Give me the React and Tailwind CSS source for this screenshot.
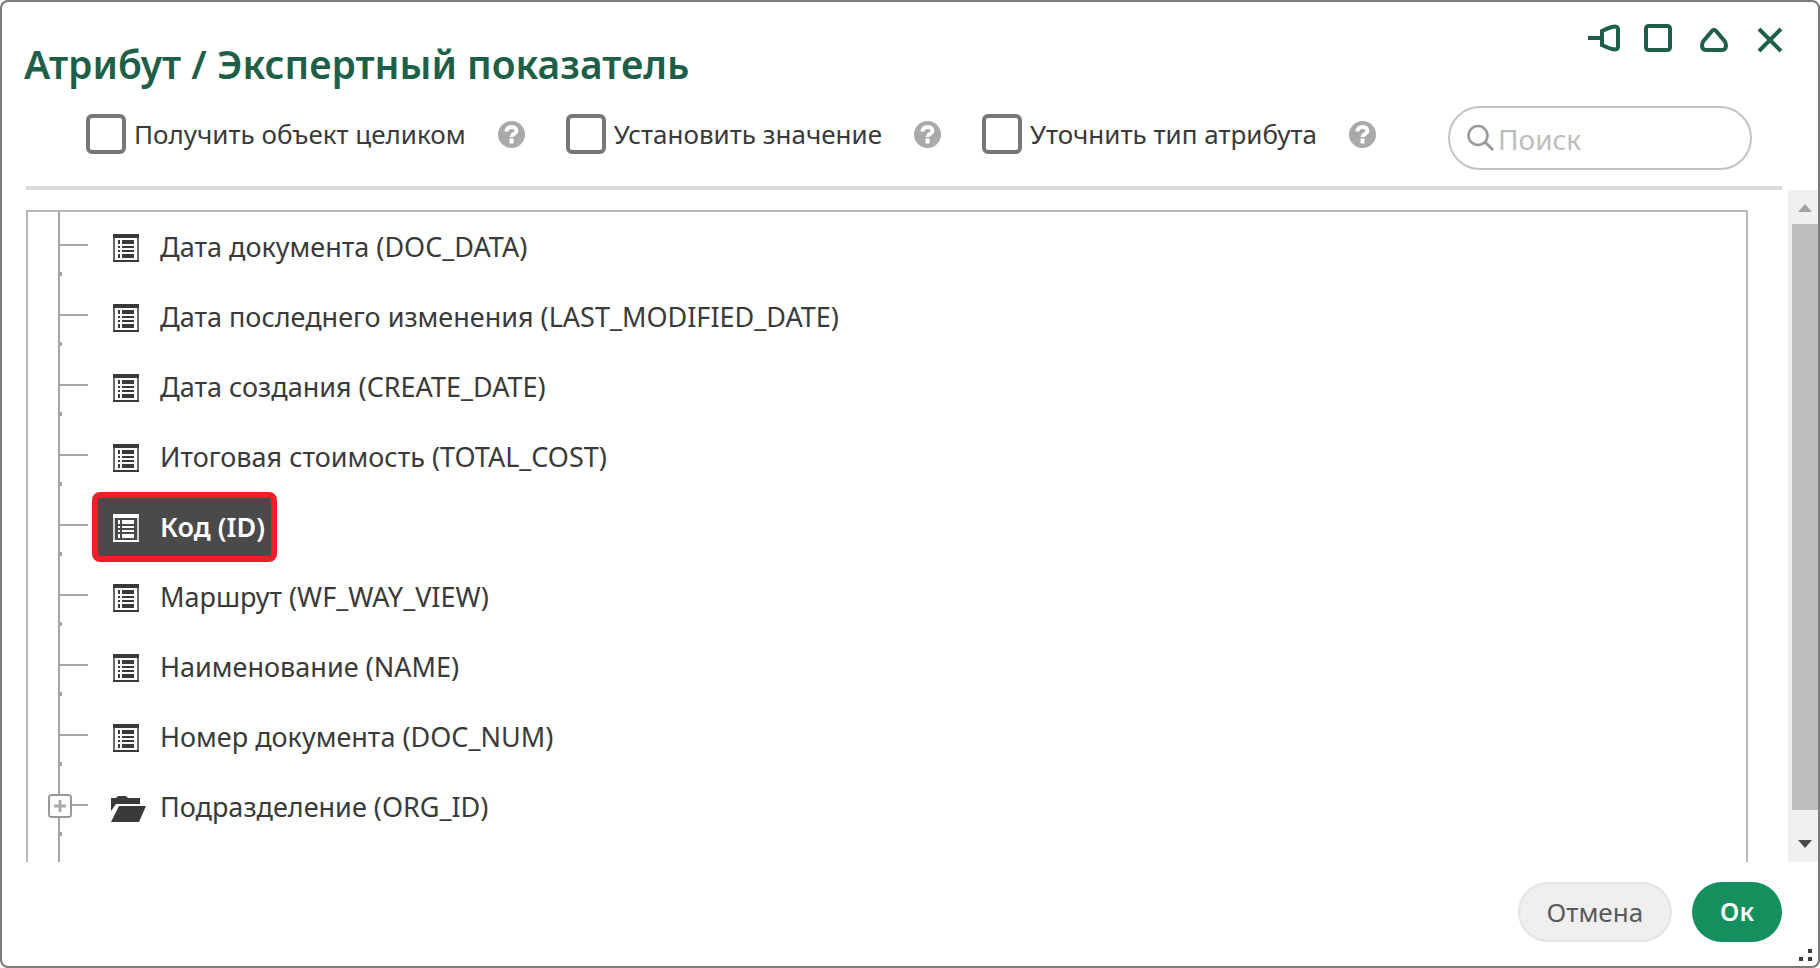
import { useState } from 'react';

const OPTIONS = [
  { key: 'whole', label: 'Получить объект целиком' },
  { key: 'value', label: 'Установить значение' },
  { key: 'type', label: 'Уточнить тип атрибута' },
];

const ITEMS = [
  { id: 'DOC_DATA', label: 'Дата документа' },
  { id: 'LAST_MODIFIED_DATE', label: 'Дата последнего изменения' },
  { id: 'CREATE_DATE', label: 'Дата создания' },
  { id: 'TOTAL_COST', label: 'Итоговая стоимость' },
  { id: 'ID', label: 'Код' },
  { id: 'WF_WAY_VIEW', label: 'Маршрут' },
  { id: 'NAME', label: 'Наименование' },
  { id: 'DOC_NUM', label: 'Номер документа' },
  { id: 'ORG_ID', label: 'Подразделение', folder: true },
];

export default function App() {
  const [selected, setSelected] = useState('ID');

  return (
    <div className="relative flex h-screen flex-col overflow-hidden rounded-lg border-2 border-[#7a7a7a] bg-white font-['Noto_Sans','Liberation_Sans',sans-serif] text-[26px] text-[#3a3a3a]">
      <header className="shrink-0 pt-5 pr-8 pl-6">
        <div className="flex items-start justify-between">
          <h1 className="mt-[18px] -ml-0.5 text-[39px] leading-12 font-semibold text-[#1e5f49]">
            Атрибут / Экспертный показатель
          </h1>
          <WindowButtons />
        </div>

        <div className="mt-[18px] mr-8 flex items-start justify-between">
          <div className="flex gap-10 pt-2 pl-15">
            {OPTIONS.map(({ key, label }) => (
              <div key={key} className="flex items-center gap-8">
                <label className="flex items-center gap-2 leading-10 whitespace-nowrap">
                  <input
                    type="checkbox"
                    className="size-10 shrink-0 appearance-none rounded-md border-4 border-[#777] checked:bg-[#777]"
                  />
                  {label}
                </label>
                <button type="button" aria-label={`Справка: ${label}`}>
                  <HelpIcon />
                </button>
              </div>
            ))}
          </div>
          <label className="mr-0.5 flex h-16 w-[304px] items-center rounded-full border-2 border-[#c4c4c4] pr-6 pl-4">
            <SearchIcon />
            <input
              type="search"
              placeholder="Поиск"
              aria-label="Поиск"
              className="w-full min-w-0 pt-0.5 pl-0.5 text-[28px] outline-none placeholder:text-[#bdbdbd]"
            />
          </label>
        </div>

        <div className="mt-4 mr-1 h-1 bg-[#dcdcdc]" />
      </header>

      <div className="flex min-h-0 flex-1">
        <main className="mt-5 mr-10 ml-6 min-w-0 flex-1 overflow-hidden border-2 border-b-0 border-[#b8b8b8]">
          <ul className="ml-[30px] h-full border-l-2 border-[#a6a6a6] text-[27px]">
            {ITEMS.map((item) => (
              <TreeItem
                key={item.id}
                item={item}
                active={selected === item.id}
                onSelect={() => setSelected(item.id)}
              />
            ))}
          </ul>
        </main>
        <Scrollbar />
      </div>

      <footer className="flex shrink-0 justify-end gap-5 pt-5 pr-9 pb-6">
        <button
          type="button"
          className="h-15 rounded-full border-2 border-[#e2e4e6] bg-[#efefef] px-[27px] text-[#5a5a5a]"
        >
          Отмена
        </button>
        <button type="button" className="h-15 rounded-full bg-[#168f5f] px-7 text-[25px] font-semibold text-white">
          Ок
        </button>
      </footer>

      <svg className="absolute right-1 bottom-0.5" width="16" height="16" fill="#3c3c3c" aria-hidden="true">
        <path d="M10 1h4v4h-4zM1 9h4v4H1zM10 9h4v4h-4z" />
      </svg>
    </div>
  );
}

function TreeItem({ item, active, onSelect }) {
  return (
    <li className="relative flex h-[70px] items-center">
      <span aria-hidden="true" className="mb-1 h-0.5 w-7 bg-[#a6a6a6]" />
      <span aria-hidden="true" className="absolute bottom-1.5 left-0 h-1 w-0.5 bg-[#a6a6a6]" />
      {item.folder && (
        <button
          type="button"
          aria-label="Развернуть"
          className="absolute top-[22px] -left-3 bg-white"
        >
          <svg width="24" height="24" fill="none" stroke="#999" strokeWidth="2" aria-hidden="true">
            <rect x="1" y="1" width="22" height="22" rx="2.5" />
            <path d="M6 12h12M12 6v12" stroke="#aaa" strokeWidth="3" />
          </svg>
        </button>
      )}
      <button
        type="button"
        onClick={onSelect}
        className={
          active
            ? 'ml-1 flex h-full items-center gap-5 rounded-lg border-[6px] border-[#f21d2b] bg-[#4a4a4a] pr-1.5 pl-3.5 font-semibold text-white'
            : 'ml-1 flex h-full items-center gap-5 px-5'
        }
      >
        {item.folder ? <FolderIcon /> : <AttributeIcon />}
        <span className="whitespace-nowrap">
          {item.label} ({item.id})
        </span>
      </button>
    </li>
  );
}

function AttributeIcon() {
  return (
    <svg width="28" height="30" viewBox="0 -2 28 30" fill="currentColor" aria-hidden="true">
      <path d="M1 0h26v4H1zM1 26h26v2H1z" />
      <path d="M1 4h2v22H1zM25 4h2v22h-2z" opacity="0.75" />
      <path d="M6 6h2v4H6zM10 6h12v4H10zM6 12h2v2H6zM10 12h12v2H10zM6 16h2v2H6zM10 16h12v2H10zM6 20h2v4H6zM10 20h12v4H10z" />
    </svg>
  );
}

function FolderIcon() {
  return (
    <svg className="-ml-0.5 -mr-1.5" width="36" height="30" viewBox="0 -2 36 30" fill="currentColor" aria-hidden="true">
      <path d="M1 4h5l2-2h8l2 2h12v6H6L1 17z" />
      <path d="M9 12h27l-7 16H1z" />
    </svg>
  );
}

function HelpIcon() {
  return (
    <svg width="28" height="28" viewBox="0 0 28 28" fill="none" aria-hidden="true">
      <circle cx="13.5" cy="14.5" r="13.5" fill="#a9a9a9" />
      <path d="M8.5 11.5c0-6 10-6 10-.5 0 3-5 3-5 6" stroke="#fff" strokeWidth="4" />
      <path d="M11.5 18.500h4v5h-4z" fill="#fff" />
    </svg>
  );
}

function SearchIcon() {
  return (
    <svg className="shrink-0" width="30" height="30" viewBox="0 0 30 30" fill="none" stroke="#999" strokeWidth="2.5" aria-hidden="true">
      <circle cx="12" cy="12.5" r="9.5" />
      <path d="m19 19 8 8" strokeWidth="3" />
    </svg>
  );
}

function WindowButtons() {
  const icons = [
    {
      label: 'Закрепить',
      path: <path d="M2 16h14M16 9c3-1.500 6-3 10-4q6-1.500 6 2.500v17q0 4-6 2.500c-4-1-7-2.500-10-4z" />,
    },
    { label: 'Развернуть окно', path: <rect x="4" y="4" width="24" height="24" rx="2.5" /> },
    {
      label: 'Свернуть',
      path: <path d="M13.5 9.5q2.5-3.500 5 0l8 9.500q1.500 2 1.500 4.500 0 4.500-4 4.500H8q-4 0-4-4.500 0-2.500 1.500-4.500z" />,
    },
    { label: 'Закрыть', path: <path d="m5 7 22 22M27 7 5 29" /> },
  ];

  return (
    <div className="flex gap-6">
      {icons.map(({ label, path }) => (
        <button key={label} type="button" aria-label={label}>
          <svg
            className="overflow-visible"
            width="32"
            height="32"
            viewBox="0 0 32 32"
            fill="none"
            stroke="#1e5f49"
            strokeWidth="4"
            aria-hidden="true"
          >
            {path}
          </svg>
        </button>
      ))}
    </div>
  );
}

function Scrollbar() {
  return (
    <div className="flex w-[30px] shrink-0 flex-col bg-[#f0f0f0]">
      <button type="button" aria-label="Прокрутить вверх" className="flex h-[34px] justify-center pt-3.5 pl-1">
        <svg width="14" height="8" fill="#a3a3a3" aria-hidden="true">
          <path d="M7 0l7 8H0z" />
        </svg>
      </button>
      <div className="ml-1 flex-1 bg-[#bdbdbd]" />
      <button type="button" aria-label="Прокрутить вниз" className="flex h-[52px] justify-center pt-[30px] pl-1">
        <svg width="14" height="8" fill="#4a4a4a" aria-hidden="true">
          <path d="M0 0h14L7 8z" />
        </svg>
      </button>
    </div>
  );
}
